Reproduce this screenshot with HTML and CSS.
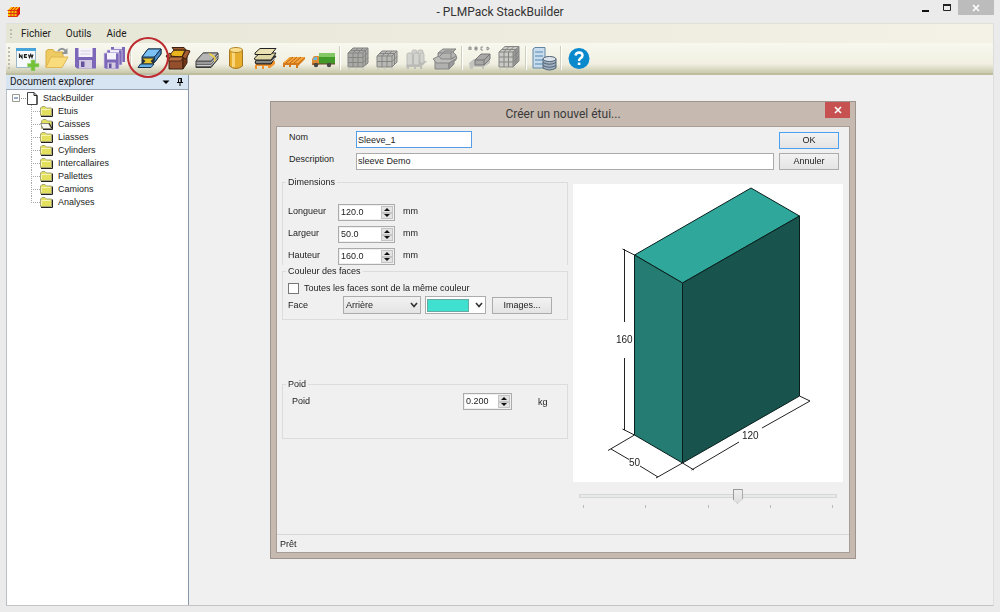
FILE: index.html
```html
<!DOCTYPE html>
<html lang="fr">
<head>
<meta charset="utf-8">
<title>PLMPack StackBuilder</title>
<link rel="stylesheet" href="styles.css">
</head>
<body>
<div class="app">
  <header class="titlebar">
    <svg class="app-icon" viewBox="0 0 14 12" aria-hidden="true"><path d="M1 4L4 1H13L10 4Z" fill="#ffb000"/><path d="M1 4H10V11H1Z" fill="#f4c400"/><path d="M10 4L13 1V8L10 11Z" fill="#d81808"/><path d="M0.5 4.5H10M1 7.5H10M1 10.5H10M4 4V11M7 4V11M10 11V4L13 1M4 4L7 1M7 4L10 1M10 8L13 5" stroke="#e03010" fill="none"/></svg>
    <h1 class="app-title">- PLMPack StackBuilder</h1>
    <div class="window-buttons">
      <button class="win-btn" aria-label="Réduire"><svg viewBox="0 0 10 10"><path d="M2 8H9" stroke="#111" stroke-width="2"/></svg></button>
      <button class="win-btn" aria-label="Agrandir"><svg viewBox="0 0 10 10"><path d="M1.500 2.500H8.500V7.500H1.500Z" fill="none" stroke="#222"/><path d="M1 2H9" stroke="#222" stroke-width="2"/></svg></button>
      <button class="win-btn win-close" aria-label="Fermer"><svg viewBox="0 0 10 10"><path d="M2 2L8 8M8 2L2 8" stroke="#fff" stroke-width="1.600"/></svg></button>
    </div>
  </header>

  <div class="frame">
    <nav class="menubar">
      <span class="grip"></span>
      <button class="menu">Fichier</button>
      <button class="menu">Outils</button>
      <button class="menu">Aide</button>
    </nav>

    <div class="toolbar" role="toolbar" aria-label="Outils">
      <span class="grip grip-tall"></span>
      <button class="tool" aria-label="Nouveau"><svg viewBox="0 0 26 26"><path d="M2.500 3.500H21.500V22.500H2.500Z" fill="#f6fafd" stroke="#9bb7cc"/><path d="M2 3H22V6H2Z" fill="#47a5dc"/><path d="M5.500 13V9.500L8 13V9.500M13 9.500H10.500V12.500H13M10.500 11H12.500M14.500 9.500L15.500 12.500L16.800 9.500L18 12.500L19 9.500" fill="none" stroke="#222" stroke-width="1.200"/><path d="M17 15H21V18.500H25V22H21V26H17V22H13.500V18.500H17Z" fill="#72c137" stroke="#a8d884" stroke-width=".6"/></svg></button>
      <button class="tool" aria-label="Ouvrir"><svg viewBox="0 0 26 26"><path d="M3 22V6L5 4.500H10L12 7H20V12" fill="#eeca62" stroke="#d8ad45"/><path d="M3 22.500L8 12H25L19 22.500Z" fill="#f9dc7c" stroke="#e2b74f"/><path d="M15 6Q19 1.500 23 6" fill="none" stroke="#8f9599" stroke-width="1.800"/><path d="M24.500 3V9H18.500Z" fill="#8f9599"/></svg></button>
      <button class="tool" aria-label="Enregistrer"><svg viewBox="0 0 26 26"><path d="M3 3H24V23.500H5L3 21.500Z" fill="#7c67b8"/><path d="M6.500 3H20.500V12H6.500Z" fill="#f5f2fa"/><path d="M8.500 6H18.500M8.500 9H18.500" stroke="#d3cde0"/><path d="M7 15H20V23.500H7Z" fill="#d2cbe2"/><path d="M9 16.500H12.500V22H9Z" fill="#64529c"/></svg></button>
      <button class="tool" aria-label="Tout enregistrer"><svg viewBox="0 0 26 26"><path d="M10 2H24V17H10Z" fill="#7c67b8"/><path d="M13 2H21V4H13Z" fill="#eeeaf6"/><path d="M6 5H21V20H6Z" fill="#7c67b8" stroke="#d8d2ea" stroke-width=".7"/><path d="M9 5H18V7.500H9Z" fill="#eeeaf6"/><path d="M3 8H18V24H4.500L3 22.500Z" fill="#7c67b8" stroke="#d8d2ea" stroke-width=".7"/><path d="M6 8H15V14.500H6Z" fill="#f5f2fa"/><path d="M6.500 17.500H14.500V23.500H6.500Z" fill="#d2cbe2"/><path d="M8 18.500H10.500V23H8Z" fill="#64529c"/></svg></button>
      <span class="sep"></span>
      <button class="tool tool-marked" aria-label="Nouvel étui"><svg viewBox="0 0 26 26"><path d="M6 12L12 4H25V9L18 18L6 19Z" fill="#4f9fdd" stroke="#17324c"/><path d="M6 12L12 4H25L18.500 12Z" fill="#7cc1f3" stroke="#17324c"/><path d="M18.500 12L25 4V9L18 18Z" fill="#4a8cc8" stroke="#17324c"/><path d="M6 12.500H18V19H6Z" fill="#26313a"/><path d="M6.500 13.500H17.500L14.500 16L17 18.500H7L9.500 16Z" fill="#e8c52e"/><path d="M4.500 19H18L15 22.500H2Z" fill="#67aee4" stroke="#17324c"/></svg></button>
      <button class="tool" aria-label="Nouvelle caisse"><svg viewBox="0 0 26 26"><path d="M4 11L9 5H20L17 12Z" fill="#e9b51d" stroke="#3d2010"/><path d="M9 5L7 2.500H19L21 5Z" fill="#9e582e" stroke="#3d2010"/><path d="M4 12H18V24H4Z" fill="#94502c" stroke="#3d2010"/><path d="M18 12L22 8V18L18 24Z" fill="#703615" stroke="#3d2010"/><path d="M17 12L21 5L25 6L21 14Z" fill="#a45c31" stroke="#3d2010"/><path d="M1 11L5 8L7 12L4 15Z" fill="#a86138" stroke="#3d2010"/><path d="M5 12H18L16 16H3Z" fill="#b66e42" stroke="#3d2010" stroke-width=".8"/></svg></button>
      <button class="tool" aria-label="Nouvelle liasse"><svg viewBox="0 0 26 26"><path d="M2 16L9 8H24V14L17 22.500H2Z" fill="#696969" stroke="#393939"/><path d="M2 16L9 8H24L17 16Z" fill="#b5b5b5" stroke="#555"/><path d="M2.500 18H17L24 10M2.500 20.500H17L24 12.500" stroke="#ccc" fill="none"/><path d="M14 8.500H17L21.500 12V15.500L20 17V13Z" fill="#f1cf45"/></svg></button>
      <button class="tool" aria-label="Nouveau cylindre"><svg viewBox="0 0 26 26"><path d="M6.500 5V21Q13 26 19.500 21V5Z" fill="#e7ae2e" stroke="#a8781e"/><path d="M9 6V22H12V6Z" fill="#f9d57c"/><ellipse cx="13" cy="5" rx="6.500" ry="2.500" fill="#fbdd8c" stroke="#b38729"/></svg></button>
      <button class="tool" aria-label="Nouvel intercalaire"><svg viewBox="0 0 26 26"><path d="M3 20L8 16H23V19L18 23H16V21H12V24H10V21H5V24H3Z" fill="#f0912b"/><path d="M3 17L8 11H24L19 19H4Z" fill="#50504c" stroke="#222"/><path d="M2.500 13L8 8H24L19 15H3Z" fill="#ded6a4" stroke="#222"/><path d="M3 8L8 3.500H24L19 9.500H3Z" fill="#eae2b2" stroke="#222"/><path d="M4 17H19L23 13" stroke="#bbb" fill="none"/></svg></button>
      <button class="tool" aria-label="Nouvelle palette"><svg viewBox="0 0 26 26"><path d="M2 18L9 12H24V14L17 21V23H15V20H10V22H8V20H4V22H2Z" fill="#d47919"/><path d="M2 18L9 12H24L17 18Z" fill="#f5a33b"/><path d="M5 18L12 12M9 18L16 12M13 18L20 12" stroke="#b76514"/></svg></button>
      <button class="tool" aria-label="Nouveau camion"><svg viewBox="0 0 26 26"><path d="M9 8H25V19H9Z" fill="#429a2a"/><path d="M9 8H25V12H9Z" fill="#83c864"/><path d="M2 14L4 11H9V20H2Z" fill="#df8c38"/><path d="M3 14L5 12H7V15H3Z" fill="#68b8df"/><path d="M2 19H25" stroke="#6d3e22"/><circle cx="6" cy="20" r="2.200" fill="#474747"/><circle cx="19" cy="20" r="2.200" fill="#474747"/></svg></button>
      <span class="sep"></span>
      <button class="tool" disabled aria-label="Analyse caisse palette"><svg viewBox="0 0 26 26"><path d="M3 8L8 3H23V18L18 22H3Z" fill="#a9a9a6"/><path d="M3 8H18V22H3ZM8 8V22M13 8V22M3 12.500H18M3 17.500H18M18 8L23 3V18L18 22M3 8L8 3H23M8 8L13 3M13 8L18 3M5.500 5.500H20.500V20M18 12.500L23 7.500M18 17.500L23 12.500" fill="none" stroke="#858583"/><path d="M4 22V25M11 22V25M18 22V25" stroke="#c4c4be"/></svg></button>
      <button class="tool" disabled aria-label="Analyse liasse palette"><svg viewBox="0 0 26 26"><path d="M3 11L8 6H23V17L18 22H3Z" fill="#b8b8b4"/><path d="M3 11H18V22H3ZM8 11V22M13 11V22M3 16.500H18M18 11L23 6V17L18 22M3 11L8 6H23M8 11L13 6M13 11L18 6M5.500 8.500H20.500V19M18 16.500L23 11.500" fill="none" stroke="#858583"/><path d="M4 22V25M11 22V25M18 22V25" stroke="#c4c4be"/></svg></button>
      <button class="tool" disabled aria-label="Analyse cylindre palette"><svg viewBox="0 0 26 26"><path d="M3 20L8 16H24L19 21V24H17V22H13V24H11V22H6V24H4Z" fill="#bcbcb8"/><g fill="#d3d3cf" stroke="#b4b4b0" stroke-width=".8"><rect x="9" y="5" width="5" height="11" rx="1.500"/><rect x="15" y="5" width="5" height="11" rx="1.500"/><rect x="4" y="8" width="5.500" height="12" rx="1.500"/><rect x="10.500" y="8" width="5.500" height="12" rx="1.500"/><rect x="17" y="8" width="4" height="10" rx="1.500"/></g></svg></button>
      <button class="tool" disabled aria-label="Analyse caisse"><svg viewBox="0 0 26 26"><path d="M6 13V8L11 4H24L21 7L24 10V15L17 19Z" fill="#b4b4b2" stroke="#858585"/><path d="M6 8H19L24 4M19 8V14M8 11L13 6H20" stroke="#858585" fill="none"/><path d="M3 16H17V24H3Z" fill="#b0b0ae" stroke="#858585"/><path d="M17 16L22 12V19L17 24Z" fill="#999" stroke="#858585"/><path d="M3 16L1 14L7 11L9 14H20L24 11L25 13L17 18H4Z" fill="#bdbdba" stroke="#858585"/></svg></button>
      <span class="sep"></span>
      <button class="tool" disabled aria-label="Analyse texte"><svg viewBox="0 0 26 26"><path d="M2 5V2H4V5M2 4H4M8 2V5H10V2ZM8 3.500H10M16 2H14V5H16M20 2V5L22 4V3Z" fill="none" stroke="#777" stroke-width=".8"/><path d="M2 18L7 14H23V18L17 22V24H15V22H6V24H3Z" fill="#c3c3be"/><path d="M8 15L14 9H23V14L17 20H8Z" fill="#a8a8a6" stroke="#777"/><path d="M8 15H17L23 9M17 15V20" fill="none" stroke="#777"/></svg></button>
      <button class="tool" disabled aria-label="Analyse palette"><svg viewBox="0 0 26 26"><path d="M3 7L9 1.500H23V16L17 22H3Z" fill="#c9c9c6"/><path d="M17 7L23 1.500V16L17 22Z" fill="#999"/><path d="M3 7H17V22H3ZM8 7V22M12.500 7V22M3 12H17M3 17H17M17 7L23 1.500V16L17 22M3 7L9 1.500H23M8 7L13 1.500M12.500 7L18 1.500M6 4.500H20V19M17 12L23 6M17 17L23 11" fill="none" stroke="#858583"/><path d="M4 22V25M11 22V25M18 22V24" stroke="#c4c4be"/></svg></button>
      <span class="sep"></span>
      <button class="tool" aria-label="Base de données"><svg viewBox="0 0 26 26"><path d="M2 4L4 2.500H14V23H2Z" fill="#c7dced" stroke="#6486a4"/><path d="M4 7H12M4 11H12M4 15H12M4 19H12" stroke="#7ba2c3" stroke-width="1.500"/><path d="M12 14V23Q18.500 27 25 23V14Z" fill="#9fb0c2" stroke="#536373"/><path d="M12 17.500Q18.500 21 25 17.500M12 20.500Q18.500 24 25 20.500" stroke="#536373" fill="none"/><ellipse cx="18.500" cy="14" rx="6.500" ry="2.500" fill="#dbe3ec" stroke="#536373"/></svg></button>
      <span class="sep"></span>
      <button class="tool" aria-label="Aide"><svg viewBox="0 0 26 26"><circle cx="13" cy="13.500" r="10.500" fill="#0a89cd"/><path d="M9.500 10.500Q10 7.500 13.200 7.500Q16.500 7.700 16.500 10.500Q16.500 12 14.500 13.300Q13 14.300 13 16" fill="none" stroke="#fff" stroke-width="2.500"/><path d="M11.800 17.600H14.400V20H11.800Z" fill="#fff"/></svg></button>
    </div>

    <div class="workspace">
      <aside class="explorer">
        <div class="explorer-head">
          <h2 class="explorer-title">Document explorer</h2>
          <svg class="head-icon" viewBox="0 0 8 8" aria-hidden="true"><path d="M0.500 2.500H7.500L4 6Z"/></svg>
          <svg class="head-icon" viewBox="0 0 8 8" aria-hidden="true"><path d="M2.500 0.500H5.500V4.500H2.500ZM1 4.500H7M4 4.500V8M5 0V4.500" fill="none" stroke="#000"/></svg>
        </div>
        <div class="tree">
          <div class="tree-root">
            <svg class="expander" viewBox="0 0 15 13" aria-hidden="true"><path d="M.5 2.500H7.500V9.500H.5Z" fill="#fff" stroke="#999"/><path d="M2 6H6" stroke="#335a98"/><path d="M9 6.500H15" stroke="#999" stroke-dasharray="1"/></svg>
            <svg class="page-icon" viewBox="0 0 11 13" aria-hidden="true"><path d="M.5 .5H7L10 3.500V12.500H.5Z" fill="#fff" stroke="#444"/><path d="M7 .5V3.500H10V12.500" fill="none" stroke="#222"/></svg>
            <span>StackBuilder</span>
          </div>
          <svg class="defs" width="0" height="0" aria-hidden="true">
            <symbol id="folder" viewBox="0 0 13 11"><path d="M.5 9.500V2L2 .5H5L6.500 2H11.500V9.500Z" fill="#e2e05c" stroke="#a9a77a"/><path d="M1.500 8V3.500H10.500" fill="none" stroke="#f6f4b4"/><path d="M12.500 2.500V10.500H1" fill="none" stroke="#222"/></symbol>
            <symbol id="folder-open" viewBox="0 0 13 11"><path d="M1.500 9.500V2L3 .5H6L7.500 2H11.500V9.500Z" fill="#e2e05c" stroke="#a9a77a"/><path d="M.5 4.500H8.500L11.500 9.500H3Z" fill="#f7f7ee" stroke="#8d8d80"/><path d="M9 4L12 9.500M12.500 2.500V10.500H3" fill="none" stroke="#222"/></symbol>
          </svg>
          <ul class="tree-list">
            <li><svg class="folder"><use href="#folder"/></svg>Etuis</li>
            <li><svg class="folder"><use href="#folder-open"/></svg>Caisses</li>
            <li><svg class="folder"><use href="#folder"/></svg>Liasses</li>
            <li><svg class="folder"><use href="#folder"/></svg>Cylinders</li>
            <li><svg class="folder"><use href="#folder"/></svg>Intercallaires</li>
            <li><svg class="folder"><use href="#folder"/></svg>Pallettes</li>
            <li><svg class="folder"><use href="#folder"/></svg>Camions</li>
            <li><svg class="folder"><use href="#folder"/></svg>Analyses</li>
          </ul>
        </div>
      </aside>
      <main class="desktop"></main>
    </div>
  </div>

  <form class="dialog" role="dialog" aria-labelledby="dlg-title" onsubmit="return false">
    <div class="dialog-head">
      <h2 class="dialog-title" id="dlg-title">Créer un nouvel étui...</h2>
      <button class="dialog-close" type="button" aria-label="Fermer"><svg viewBox="0 0 10 10"><path d="M2 2L8 8M8 2L2 8" stroke="#fff" stroke-width="1.600"/></svg></button>
    </div>
    <div class="dialog-body">
      <div class="identity">
        <div class="identity-fields">
          <label for="nom">Nom</label>
          <input class="text-box name-box" id="nom" type="text" value="Sleeve_1" autofocus>
          <label for="desc">Description</label>
          <input class="text-box" id="desc" type="text" value="sleeve Demo">
        </div>
        <div class="identity-actions">
          <button class="btn btn-default" type="submit">OK</button>
          <button class="btn" type="button">Annuler</button>
        </div>
      </div>

      <div class="content">
        <div class="settings">
          <fieldset class="group group-dims">
            <legend>Dimensions</legend>
            <div class="dim-row">
              <label for="lon">Longueur</label>
              <span class="spinner"><input id="lon" type="text" inputmode="decimal" value="120.0"><button type="button" class="spin up" aria-label="Augmenter"></button><button type="button" class="spin down" aria-label="Diminuer"></button></span>
              <span class="unit">mm</span>
            </div>
            <div class="dim-row">
              <label for="lar">Largeur</label>
              <span class="spinner"><input id="lar" type="text" inputmode="decimal" value="50.0"><button type="button" class="spin up" aria-label="Augmenter"></button><button type="button" class="spin down" aria-label="Diminuer"></button></span>
              <span class="unit">mm</span>
            </div>
            <div class="dim-row">
              <label for="hau">Hauteur</label>
              <span class="spinner"><input id="hau" type="text" inputmode="decimal" value="160.0"><button type="button" class="spin up" aria-label="Augmenter"></button><button type="button" class="spin down" aria-label="Diminuer"></button></span>
              <span class="unit">mm</span>
            </div>
          </fieldset>
          <fieldset class="group group-color">
            <legend>Couleur des faces</legend>
            <div class="check-row">
              <input class="check" id="same" type="checkbox">
              <label for="same">Toutes les faces sont de la même couleur</label>
            </div>
            <div class="face-row">
              <label for="face">Face</label>
              <span class="combo">
                <select id="face"><option>Arrière</option></select>
                <svg class="chevron" viewBox="0 0 8 8" aria-hidden="true"><path d="M1 2L4 5.500L7 2" fill="none" stroke="#333" stroke-width="1.600"/></svg>
              </span>
              <span class="combo combo-color">
                <select aria-label="Couleur"><option value="turquoise"></option></select>
                <i class="swatch"></i>
                <svg class="chevron" viewBox="0 0 8 8" aria-hidden="true"><path d="M1 2L4 5.500L7 2" fill="none" stroke="#333" stroke-width="1.600"/></svg>
              </span>
              <button class="btn" type="button">Images...</button>
            </div>
          </fieldset>
          <fieldset class="group group-weight">
            <legend>Poid</legend>
            <div class="weight-row">
              <label for="poid">Poid</label>
              <span class="spinner"><input id="poid" type="text" inputmode="decimal" value="0.200"><button type="button" class="spin up" aria-label="Augmenter"></button><button type="button" class="spin down" aria-label="Diminuer"></button></span>
              <span class="unit">kg</span>
            </div>
          </fieldset>
        </div>

        <div class="preview">
          <svg class="view3d" viewBox="0 0 270 298" role="img" aria-label="Étui 120 × 50 × 160">
            <g stroke="#0a1f1d" stroke-linejoin="round">
              <path d="M61.500 71L178 4L226.500 32L109.500 99Z" fill="#30a79b"/>
              <path d="M61.500 71L109.500 99V279L61.500 251Z" fill="#247c73"/>
              <path d="M109.500 99L226.500 32V212L109.500 279Z" fill="#18534d"/>
            </g>
            <path d="M61.500 71L49.500 65M51.500 65V138M51.500 174V246M49.500 245L61.500 251L35 266.500M38 265L56 275.500M67 282L85 293M83 294L109.500 279L121 286M118.500 286L166 258M189 244L237 217L226.500 212" fill="none" stroke="#222"/>
            <text x="43" y="159">160</text>
            <text x="169" y="255">120</text>
            <text x="56" y="282">50</text>
          </svg>
          <div class="slider">
            <input type="range" min="0" max="100" value="62" aria-label="Angle de vue">
            <div class="ticks"><i></i><i></i><i></i><i></i><i></i></div>
          </div>
        </div>
      </div>

      <div class="status">Prêt</div>
    </div>
  </form>
</div>
</body>
</html>
```
FILE: styles.css
```css
* { box-sizing: border-box; }

body {
  margin: 0;
  background: #ebebeb;
  color: #1c1c1c;
  font: 9px/13px "Liberation Sans", Arial, sans-serif;
}

button, input, select { font: inherit; color: inherit; margin: 0; padding: 0; }
button { border: 0; background: none; }
h1, h2 { margin: 0; font-weight: 400; }
svg { display: block; }

.app {
  position: relative;
  display: flex;
  flex-direction: column;
  min-height: 100vh;
  padding: 0 6px 6px;
}

/* Main window title */
.titlebar {
  display: grid;
  grid-template-columns: 1fr auto 1fr;
  height: 23px;
  align-items: center;
}
.app-icon { width: 14px; height: 12px; margin-left: 1px; }
.app-title { font: 12px/22px Roboto, "Open Sans", sans-serif; color: #333; }
.window-buttons { display: flex; justify-content: flex-end; align-self: start; }
.win-btn { width: 22px; height: 15px; display: grid; place-items: center; }
.win-btn svg { width: 10px; height: 10px; }
.win-close { width: 36px; background: #bcbcbc; }

.frame {
  flex: 1;
  display: flex;
  flex-direction: column;
  border-right: 1px solid #dedede;
  border-bottom: 1px solid #c4c4c4;
  background: #f0f0f0;
}

/* Menu */
.menubar {
  display: flex;
  align-items: center;
  height: 20px;
  padding-left: 4px;
  border-top: 1px solid #e0e0da;
  background: linear-gradient(90deg, #e6e6d6, #f4f1e6);
}
.grip { width: 2px; height: 9px; background: repeating-linear-gradient(#bdbdaf 0 2px, transparent 2px 4px); }
.menu { margin-left: 9px; margin-right: 6px; font: 10px/18px Roboto, "Open Sans", sans-serif; }

/* Toolbar */
.toolbar {
  display: flex;
  align-items: center;
  height: 32px;
  padding-left: 2px;
  background: linear-gradient(#f8f8ef, #f0efe1 70%, #c9c9ad);
  border-bottom: 2px solid #bebda0;
}
.grip-tall { height: 22px; margin-right: 2px; }
.tool { position: relative; flex: none; width: 29px; height: 28px; display: grid; place-items: center; }
.tool svg { width: 26px; height: 26px; }
.sep { width: 2px; height: 24px; margin: 0 2px; border-left: 1px solid #cfcfbe; background: #fff; }
.tool-marked::after {
  content: "";
  position: absolute;
  inset: -7px -6px -6px -7px;
  border: 2px solid #bd2c30;
  border-radius: 50%;
  z-index: 1;
}

/* Explorer */
.workspace { flex: 1; display: flex; }
.explorer { width: 183px; display: flex; flex-direction: column; border-right: 1px solid #8796a8; }
.explorer-head {
  display: flex;
  align-items: center;
  gap: 6px;
  height: 15px;
  padding: 0 4px;
  background: #d7e4f2;
  border-bottom: 1px solid #9aa7b5;
}
.explorer-title { flex: 1; font: 10px/14px Roboto, "Open Sans", sans-serif; }
.head-icon { width: 8px; height: 8px; }
.tree { flex: 1; padding: 2px 5px; background: #fff; border-left: 1px solid #b8c0c8; }
.tree-root { display: flex; align-items: center; height: 13px; }
.expander { width: 15px; height: 13px; }
.page-icon { width: 11px; height: 13px; margin-right: 5px; }
.defs { position: absolute; }
.tree-list { margin: 0; padding: 0 0 0 19px; list-style: none; }
.tree-list li { display: flex; align-items: center; height: 13px; }
.tree-list li::before {
  content: "";
  width: 9px;
  height: 13px;
  background:
    repeating-linear-gradient(#aaa 0 1px, transparent 1px 2px) 0 0 / 1px 100% no-repeat,
    repeating-linear-gradient(90deg, #aaa 0 1px, transparent 1px 2px) 0 6px / 9px 1px no-repeat;
}
.tree-list li:last-child::before { background-size: 1px 7px, 9px 1px; }
.folder { width: 13px; height: 11px; margin-right: 5px; }

/* Dialog window */
.dialog {
  position: absolute;
  top: 101px;
  left: 270px;
  width: 586px;
  padding: 0 5px 5px;
  background: #c5b9b0;
  border: 1px solid #9d948d;
}
.dialog-head { display: grid; grid-template-columns: 1fr auto 1fr; height: 24px; align-items: center; }
.dialog-title { grid-column: 2; font: 12px/24px Roboto, "Open Sans", sans-serif; color: #3a3a3a; }
.dialog-close { justify-self: end; align-self: start; width: 25px; height: 16px; display: grid; place-items: center; background: #c75050; }
.dialog-close svg { width: 10px; height: 10px; }
.dialog-body { background: #f0f0f0; border: 1px solid #a79d96; }

.identity { display: flex; gap: 5px; padding: 4px 10px 0 12px; }
.identity-fields { flex: 1; display: grid; grid-template-columns: 67px 1fr; row-gap: 4px; }
.identity-fields label { line-height: 12px; }
.text-box { width: 100%; height: 17px; padding: 0 1px; border: 1px solid #ababab; background: #fff; }
.text-box:focus { outline: 0; }
.name-box { width: 116px; border-color: #569de5; }
.identity-actions { display: flex; flex-direction: column; gap: 4px; padding-top: 1px; }
.btn { width: 60px; height: 17px; border: 1px solid #acacac; background: linear-gradient(#f2f2f2, #e4e4e4); text-align: center; line-height: 15px; }
.btn-default { border-color: #4a9ff0; }

.content { display: flex; gap: 5px; padding: 6px 6px 0 5px; }
.settings { flex: 1; }
.group { min-width: 0; margin: 0; padding: 0 5px; border: 1px solid #dcdcdc; }
.group legend { padding: 0 2px; margin-left: -2px; line-height: 12px; }
.group-dims { height: 89px; padding-top: 16px; border-bottom: 0; }
.dim-row { display: grid; grid-template-columns: 50px 57px 1fr; height: 17px; margin-bottom: 5px; }
.dim-row label, .unit { line-height: 14px; }
.dim-row .unit { margin-left: 8px; }
.spinner {
  display: grid;
  grid-template: 1fr 1fr / 1fr 12px;
  height: 17px;
  padding: 1px;
  border: 1px solid #ababab;
  background: #f0f0f0;
}
.spinner input { grid-row: 1 / 3; width: 100%; min-width: 0; padding-left: 1px; border: 0; background: #fff; }
.spin { display: grid; place-items: center; min-height: 0; background: #e3e3e3; border: 1px solid #c4c4c4; }
.spin::before { content: ""; border: 3px solid transparent; border-top-width: 0; border-bottom: 3px solid #111; }
.spin.down::before { border-bottom-width: 0; border-top: 3px solid #111; }

.group-color { height: 55px; }
.check-row { display: flex; align-items: center; gap: 5px; height: 18px; padding-top: 5px; }
.check { appearance: none; width: 11px; height: 11px; border: 1px solid #777; background: #fff; }
.face-row { display: flex; align-items: center; height: 18px; margin-top: 1px; }
.face-row label { width: 55px; }
.combo { display: flex; align-items: center; position: relative; width: 78px; height: 18px; margin-right: 4px; }
.combo select { appearance: none; width: 100%; height: 100%; padding-left: 2px; border: 1px solid #acacac; border-radius: 0; background: linear-gradient(#f2f2f2, #e4e4e4); }
.combo-color { width: 61px; margin-right: 6px; }
.combo-color select { background: #fff; }
.chevron { position: absolute; right: 3px; width: 8px; height: 8px; pointer-events: none; }
.swatch { position: absolute; left: 2px; width: 42px; height: 13px; background: #40e0d0; border: 1px solid #6aa9a2; pointer-events: none; }

.group-weight { height: 61px; margin-top: 58px; padding-top: 3px; }
.weight-row { display: grid; grid-template-columns: 171px 49px 1fr; align-items: center; padding-left: 4px; }
.weight-row .unit { margin-left: 26px; }

/* Preview */
.preview { width: 270px; padding-top: 8px; }
.view3d { width: 100%; background: #fff; }
.view3d text { font: 10px "Liberation Sans", sans-serif; fill: #222; }
.slider { padding: 6px 6px 0; }
.slider input { appearance: none; display: block; width: 100%; height: 15px; background: none; }
.slider input::-webkit-slider-runnable-track { height: 4px; border: 1px solid #d6d6d6; background: #e7eaea; }
.slider input::-webkit-slider-thumb {
  appearance: none;
  width: 10px;
  height: 15px;
  margin-top: -6px;
  background: linear-gradient(#eee, #ddd) padding-box, #999;
  border: 1px solid #999;
  clip-path: polygon(0 0, 100% 0, 100% 70%, 50% 100%, 0 70%);
}
.ticks { display: flex; justify-content: space-between; padding: 2px 4px 0; }
.ticks i { width: 1px; height: 3px; background: #bbb; }

.status { margin-top: 26px; height: 18px; padding: 3px 3px 0; border-top: 1px solid #d7d7d7; }
```
